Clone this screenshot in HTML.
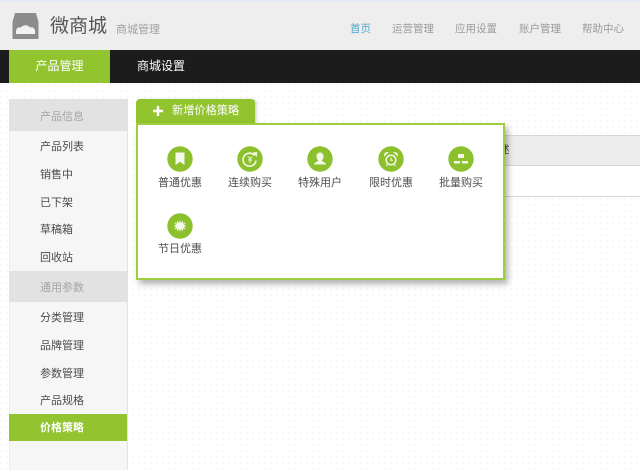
<!DOCTYPE html>
<html lang="zh-CN">
<head>
<meta charset="utf-8">
<title>微商城</title>
<style>
*{box-sizing:border-box;margin:0;padding:0}
html,body{width:640px;height:470px;overflow:hidden}
body{position:relative;background-color:#fff;background-image:radial-gradient(circle at 1px 1px,#f6f6f6 0.8px,transparent 1px);background-size:6px 6px;font-family:"Liberation Sans","Noto Sans CJK SC",sans-serif;font-size:11px;color:#555}
.a{position:absolute;white-space:nowrap}
#top{left:0;top:0;width:640px;height:50px;background:#eeeeee;border-top:2px solid #e4e9f4}
#bar{left:0;top:50px;width:640px;height:33px;background-color:#141414;background-image:radial-gradient(circle at 1px 1px,#262626 0.6px,transparent 0.9px);background-size:2px 2px}
#tab1{left:9px;top:50px;width:101px;height:33px;background:#92c430;color:#fff;text-align:center;line-height:33px;font-size:12px}
#tab2{left:137px;top:50px;height:33px;color:#fff;line-height:33px;font-size:12px}
.nav{top:22px;font-size:10.5px;color:#9a9a9a;line-height:14px}
#side{left:9px;top:99px;width:119px;height:371px;background:#f6f6f6;border-right:1px solid #e2e2e2;border-left:1px solid #eee}
.h{left:9px;width:118px;background:#e2e2e2;color:#a5a5a5;font-size:11px;padding-left:31px}
.i{left:40px;font-size:11px;color:#4c4c4c;line-height:14px}
#act{left:9px;top:414px;width:118px;height:27px;background:#92c430;color:#fff;font-weight:bold;font-size:11px;line-height:29px;padding-left:31px}
#thead{left:505px;top:135px;width:135px;height:31px;background:#ededed;border-top:1px solid #d8d8d8;border-bottom:1px solid #d4d4d4}
#trow{left:505px;top:166px;width:135px;height:31px;background:#fff;border-bottom:1px solid #d8d8d8}
#pop{left:136px;top:123px;width:369px;height:157px;background:#fff;border:2px solid #a0cd3f;box-shadow:3px 4px 6px rgba(0,0,0,.3)}
#ptab{left:136px;top:99px;width:119px;height:25px;background:#92c430;border-radius:4px 4px 0 0;color:#fff;box-shadow:2px 0 2px rgba(0,0,0,.15)}
.ic{position:absolute;width:26px;height:26px}
.t{font-size:11px;color:#4f4f4f;line-height:14px;width:60px;text-align:center}
</style>
</head>
<body>
<div class="a" id="top"></div>
<svg class="a" style="left:12px;top:12px" width="27" height="28" viewBox="0 0 27 28">
<path d="M3 1H24L26.5 10V27H.5V10Z" fill="#8c8c8c"/>
<path d="M4 19C4 16 7 14.500 9 15.500C11 12.500 16 12.500 18 15.500C20 14.500 23 16 23 19V22H4Z" fill="#f2f2f2"/>
</svg>
<div class="a" style="left:50px;top:14px;font-size:19px;line-height:26px;color:#555">微商城</div>
<div class="a" style="left:116px;top:23px;font-size:11px;line-height:14px;color:#a0a0a0">商城管理</div>
<div class="a nav" style="left:350px;color:#4ea6cc">首页</div>
<div class="a nav" style="left:392px">运营管理</div>
<div class="a nav" style="left:455px">应用设置</div>
<div class="a nav" style="left:519px">账户管理</div>
<div class="a nav" style="left:582px">帮助中心</div>
<div class="a" id="bar"></div>
<div class="a" id="tab1">产品管理</div>
<div class="a" id="tab2">商城设置</div>

<div class="a" id="side"></div>
<div class="a h" style="top:99px;height:32px;line-height:36px">产品信息</div>
<div class="a i" style="top:140px">产品列表</div>
<div class="a i" style="top:168px">销售中</div>
<div class="a i" style="top:196px">已下架</div>
<div class="a i" style="top:223px">草稿箱</div>
<div class="a i" style="top:251px">回收站</div>
<div class="a h" style="top:271px;height:31px;line-height:34px">通用参数</div>
<div class="a i" style="top:311px">分类管理</div>
<div class="a i" style="top:339px">品牌管理</div>
<div class="a i" style="top:367px">参数管理</div>
<div class="a i" style="top:394px">产品规格</div>
<div class="a" id="act">价格策略</div>

<div class="a" id="thead"></div>
<div class="a" id="trow"></div>
<div class="a" style="left:505px;top:143px;width:5px;overflow:hidden;font-size:10.500px;line-height:14px;color:#444"><span style="margin-left:-6px">述</span></div>

<div class="a" id="ptab">
<svg class="a" style="left:16px;top:6px" width="12" height="12" viewBox="0 0 12 12"><path d="M6 1V11M1 6H11" stroke="#fff" stroke-width="2.400" fill="none"/></svg>
<div class="a" style="left:36px;top:5px;font-size:11.200px;line-height:14px">新增价格策略</div>
</div>
<div class="a" id="pop"></div>

<svg class="ic" style="left:167px;top:146px" viewBox="0 0 26 26"><circle cx="13" cy="13" r="12.700" fill="#8cc02d"/><path d="M8.500 6.500H17.500V19L13 15.800L8.500 19Z" fill="#f4f8e8"/></svg>
<div class="a t" style="left:150px;top:176px">普通优惠</div>

<svg class="ic" style="left:237px;top:146px" viewBox="0 0 26 26"><circle cx="13" cy="13" r="12.700" fill="#8cc02d"/><path d="M17.500 9.500A6.500 6.500 0 1 0 19 14.500" fill="none" stroke="#f4f8e8" stroke-width="1.600"/><path d="M15.500 6.500L20 6V11Z" fill="#f4f8e8"/><path d="M11 10.500L13 13L15 10.500M13 13V17M11 14H15" fill="none" stroke="#f4f8e8" stroke-width="1"/></svg>
<div class="a t" style="left:220px;top:176px">连续购买</div>

<svg class="ic" style="left:307px;top:146px" viewBox="0 0 26 26"><circle cx="13" cy="13" r="12.700" fill="#8cc02d"/><path d="M13 6.500C15.200 6.500 16.500 8.200 16.500 10.300C16.500 12 15.800 13.400 15 14.200V15.200C16.500 16 18.500 16.300 19 18.500H7C7.500 16.300 9.500 16 11 15.200V14.200C10.200 13.400 9.500 12 9.500 10.300C9.500 8.200 10.800 6.500 13 6.500Z" fill="#f4f8e8"/></svg>
<div class="a t" style="left:290px;top:176px">特殊用户</div>

<svg class="ic" style="left:378px;top:146px" viewBox="0 0 26 26"><circle cx="13" cy="13" r="12.700" fill="#8cc02d"/><circle cx="13" cy="14" r="4.800" fill="none" stroke="#f4f8e8" stroke-width="1.500"/><path d="M13 11.500V14.300H15" fill="none" stroke="#f4f8e8" stroke-width="1.100"/><path d="M6.500 9.500C6.500 7.500 8 6.200 9.800 6.500ZM19.500 9.500C19.500 7.500 18 6.200 16.200 6.500Z" fill="#f4f8e8" stroke="#f4f8e8"/><path d="M9.500 18.500L8.500 20M16.500 18.500L17.500 20" stroke="#f4f8e8" stroke-width="1.200"/></svg>
<div class="a t" style="left:361px;top:176px">限时优惠</div>

<svg class="ic" style="left:448px;top:146px" viewBox="0 0 26 26"><circle cx="13" cy="13" r="12.700" fill="#8cc02d"/><rect x="10" y="8" width="6" height="4" fill="#f4f8e8"/><rect x="6" y="15" width="6" height="2.500" fill="#f4f8e8"/><rect x="14" y="15" width="6" height="2.500" fill="#f4f8e8"/></svg>
<div class="a t" style="left:431px;top:176px">批量购买</div>

<svg class="ic" style="left:167px;top:213px" viewBox="0 0 26 26"><circle cx="13" cy="13" r="12.700" fill="#8cc02d"/><path d="M13 7L14 10L16 7.500L16 10.500L19 9.500L17 12L19.500 13L17 14L19 16.500L16 15.500L16 18.500L14 16L13 19L12 16L10 18.500L10 15.500L7 16.500L9 14L6.500 13L9 12L7 9.500L10 10.500L10 7.500L12 10Z" fill="#f4f8e8"/></svg>
<div class="a t" style="left:150px;top:242px">节日优惠</div>
</body>
</html>
